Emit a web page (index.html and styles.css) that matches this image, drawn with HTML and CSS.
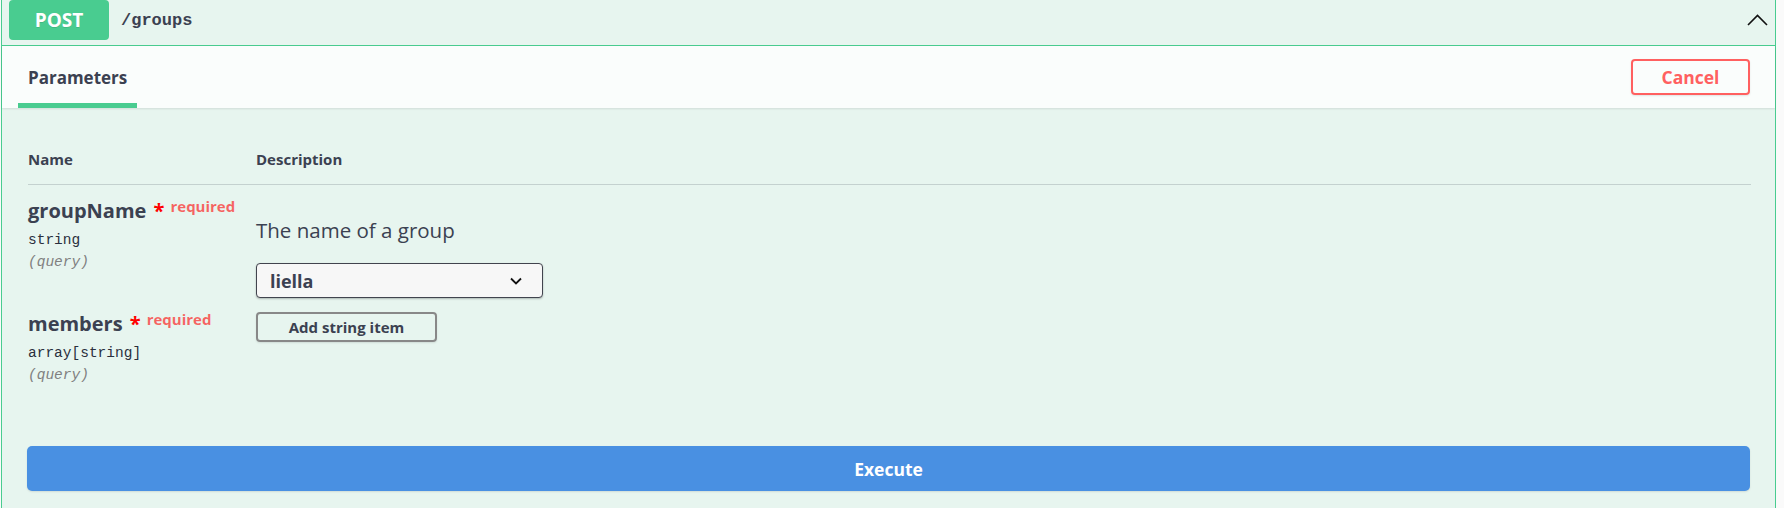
FILE: index.html
```html
<!DOCTYPE html>
<html>
<head>
<meta charset="utf-8">
<link rel="stylesheet" href="styles.css">
</head>
<body>
<div class="page">
  <div class="opblock">
    <div class="summary">
      <span class="method">POST</span>
      <span class="path">/groups</span>
      <svg class="arrow" width="21" height="12" viewBox="0 0 21 12"><path d="M1 11 L10.5 1.5 L20 11" fill="none" stroke="#111" stroke-width="1.6"/></svg>
    </div>
    <div class="section-header">
      <div class="tab"><h4 class="tab-title">Parameters</h4></div>
      <button class="btn-cancel">Cancel</button>
    </div>
    <div class="table-container">
      <div class="params-head">
        <div class="col-name">Name</div>
        <div class="col-desc">Description</div>
      </div>
      <div class="param-row">
        <div class="col-name">
          <div class="pname">groupName<span class="star">&nbsp;*</span><span class="req">required</span></div>
          <div class="ptype">string</div>
          <div class="pin">(query)</div>
        </div>
        <div class="col-desc">
          <p class="desc">The name of a group</p>
          <div class="select"><span class="select-value">liella</span><svg class="select-arrow" width="12" height="8" viewBox="0 0 12 8"><path d="M1 1.5 L6 6.5 L11 1.5" fill="none" stroke="#111" stroke-width="1.8"/></svg></div>
        </div>
      </div>
      <div class="param-row">
        <div class="col-name">
          <div class="pname">members<span class="star">&nbsp;*</span><span class="req">required</span></div>
          <div class="ptype">array[string]</div>
          <div class="pin">(query)</div>
        </div>
        <div class="col-desc">
          <button class="btn-add">Add string item</button>
        </div>
      </div>
    </div>
    <div class="execute-wrapper">
      <button class="btn-execute">Execute</button>
    </div>
  </div>
</div>
</body>
</html>
```
FILE: styles.css
```css
html, body {
  margin: 0;
  padding: 0;
  height: 100%;
  overflow: hidden;
  background: #fafafa;
}
body {
  font-family: "Open Sans", "Noto Sans", sans-serif;
  color: #3b4151;
}
.page {
  padding-left: 1px;
}
.opblock {
  box-sizing: border-box;
  width: 1775px;
  margin-top: -7px;
  border: 1px solid #49cc90;
  border-radius: 4px;
  background: rgba(73, 204, 144, 0.1);
}
.summary {
  display: flex;
  align-items: center;
  padding: 6px 7px 5px 7px;
  border-bottom: 1px solid #49cc90;
}
.method {
  box-sizing: border-box;
  min-width: 100px;
  height: 40px;
  line-height: 40px;
  text-align: center;
  background: #49cc90;
  color: #fff;
  font-size: 19px;
  font-weight: 700;
  border-radius: 4px;
  text-shadow: 0 1px 0 rgba(0, 0, 0, 0.1);
}
.path {
  margin-left: 12px;
  font-family: "Liberation Mono", monospace;
  font-size: 17px;
  font-weight: 600;
  color: #3b4151;
}
.arrow {
  margin-left: auto;
  display: block;
}
.section-header {
  box-sizing: border-box;
  height: 62px;
  display: flex;
  align-items: center;
  justify-content: space-between;
  padding: 0 25px 0 26px;
  background: rgba(255, 255, 255, 0.8);
  box-shadow: 0 1px 2px rgba(0, 0, 0, 0.1);
}
.tab {
  position: relative;
  align-self: stretch;
  display: flex;
  align-items: center;
  padding-top: 2px;
}
.tab::after {
  content: "";
  position: absolute;
  left: -10%;
  width: 120%;
  bottom: 0;
  height: 5px;
  background: #49cc90;
}
.tab-title {
  margin: 0;
  font-size: 17px;
  font-weight: 700;
  line-height: 24px;
}
.btn-cancel {
  box-sizing: border-box;
  width: 119px;
  height: 36px;
  border: 2px solid #ff6060;
  border-radius: 4px;
  background: transparent;
  color: #ff6060;
  font-family: inherit;
  font-size: 17.5px;
  font-weight: 700;
  box-shadow: 0 1px 2px rgba(0, 0, 0, 0.1);
  padding: 0;
}
.table-container {
  padding: 26px 24px 0 26px;
}
.params-head {
  display: grid;
  grid-template-columns: 228px 1fr;
  padding: 15px 0;
  border-bottom: 1px solid rgba(59, 65, 81, 0.2);
  font-size: 15px;
  font-weight: 700;
  line-height: 20px;
}
.param-row {
  display: grid;
  grid-template-columns: 228px 1fr;
  padding-top: 13px;
}
.pname {
  font-size: 20px;
  font-weight: 700;
  line-height: 26px;
  white-space: nowrap;
}
.star {
  color: red;
  line-height: 0;
  margin-left: 2px;
}
.req {
  font-size: 15px;
  line-height: 0;
  color: rgba(255, 0, 0, 0.6);
  padding-left: 6px;
  vertical-align: 6px;
}
.ptype {
  margin-top: 6px;
  font-family: "Liberation Mono", monospace;
  font-size: 14.5px;
  font-weight: 400;
  color: #2a2f3d;
  line-height: 20px;
}
.pin {
  margin-top: 2px;
  font-family: "Liberation Mono", monospace;
  font-size: 14.5px;
  font-style: italic;
  color: #808080;
  line-height: 20px;
}
.desc {
  margin: 18px 0 0 0;
  font-size: 20.5px;
  line-height: 28px;
}
.select {
  box-sizing: border-box;
  width: 287px;
  height: 35px;
  margin-top: 19px;
  display: flex;
  align-items: center;
  justify-content: space-between;
  padding: 0 20px 0 13px;
  border: 1px solid #41444e;
  border-radius: 4px;
  background: #f7f7f7;
  box-shadow: 0 1px 2px 0 rgba(0, 0, 0, 0.25);
}
.select-value {
  font-size: 18px;
  font-weight: 700;
}
.select-arrow {
  display: block;
}
.btn-add {
  box-sizing: border-box;
  width: 181px;
  height: 30px;
  margin-top: 1px;
  border: 2px solid #888;
  border-radius: 4px;
  background: transparent;
  color: #3b4151;
  font-family: inherit;
  font-size: 15px;
  font-weight: 700;
  padding: 0;
  box-shadow: 0 1px 2px rgba(0, 0, 0, 0.1);
}
.execute-wrapper {
  padding: 61px 25px 30px 25px;
}
.btn-execute {
  display: block;
  box-sizing: border-box;
  width: 100%;
  height: 45px;
  border: none;
  border-radius: 5px;
  background: #4990e2;
  color: #fff;
  font-family: inherit;
  font-size: 17.5px;
  font-weight: 700;
  box-shadow: 0 1px 2px rgba(0, 0, 0, 0.1);
}
```
